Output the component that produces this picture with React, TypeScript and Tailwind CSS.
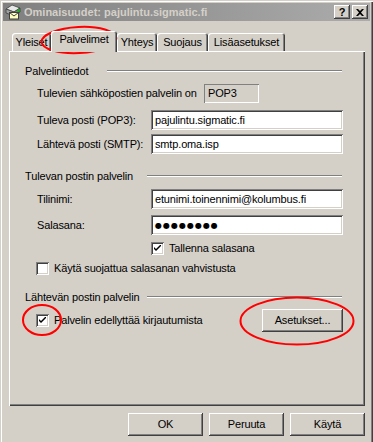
import React from "react";

const sunken =
  "shadow-[inset_1px_1px_0_#808080,inset_-1px_-1px_0_#ffffff,inset_2px_2px_0_#404040,inset_-2px_-2px_0_#d4d0c8]";
const raised =
  "shadow-[inset_-1px_-1px_0_#404040,inset_1px_1px_0_#ffffff,inset_-2px_-2px_0_#808080]";

function TitleIcon() {
  return (
    <svg width="16" height="16" viewBox="0 0 16 16" className="shrink-0">
      <polygon points="1,5 7,1 15,4 9,8" fill="#e8e8e8" stroke="#404040" strokeWidth="0.8" />
      <polygon points="1,5 9,8 9,12 1,9" fill="#a0a0a0" stroke="#404040" strokeWidth="0.8" />
      <polygon points="9,8 15,4 15,8 9,12" fill="#808080" stroke="#404040" strokeWidth="0.8" />
      <rect x="4.5" y="8.5" width="9" height="6.5" fill="#ffffc0" stroke="#404040" strokeWidth="1" />
      <polyline points="4.5,8.5 9,12 13.5,8.5" fill="none" stroke="#404040" strokeWidth="1" />
      <circle cx="13.5" cy="6.5" r="1.3" fill="#00c000" />
    </svg>
  );
}

function CaptionButton({ children }: { children: React.ReactNode }) {
  return (
    <div className={`flex h-[14px] w-[16px] items-center justify-center bg-[#d4d0c8] ${raised}`}>
      {children}
    </div>
  );
}

function ActiveTab({ label }: { label: string }) {
  return (
    <div className="relative z-10 mb-[-1px] flex h-[21px] w-[66px] justify-center rounded-t-[3px] bg-[#d4d0c8] pt-[2px] shadow-[inset_1px_1px_0_#ffffff,inset_-1px_0_0_#404040,inset_-2px_0_0_#808080]">
      {label}
    </div>
  );
}

function InactiveTab({ label, width }: { label: string; width: string }) {
  return (
    <div
      className={`flex h-[18px] ${width} items-center justify-center rounded-t-[3px] shadow-[inset_1px_1px_0_#ffffff,inset_-1px_0_0_#404040,inset_-2px_0_0_#808080]`}
    >
      {label}
    </div>
  );
}

function GroupHeader({ label, labelWidth, className }: { label: string; labelWidth: string; className: string }) {
  return (
    <div className={`flex h-[14px] items-center ${className}`}>
      <span className={`${labelWidth} shrink-0 pl-[16px]`}>{label}</span>
      <div className="mr-[23px] flex-1 border-t border-b border-t-[#808080] border-b-white" />
    </div>
  );
}

function Field({ label, value, className, password }: { label: string; value: string; className: string; password?: boolean }) {
  return (
    <div className={`flex h-[20px] items-center pl-[28px] ${className}`}>
      <span className="w-[114px] shrink-0">{label}</span>
      <div className={`flex h-[20px] w-[192px] items-center bg-white pl-[4px] ${sunken}`}>
        {password ? (
          <span className="font-['DejaVu_Sans',sans-serif] text-[8px] tracking-[1px]">{value}</span>
        ) : (
          value
        )}
      </div>
    </div>
  );
}

function CheckBox({ checked }: { checked?: boolean }) {
  return (
    <div className={`flex h-[13px] w-[13px] shrink-0 items-center justify-center bg-white ${sunken}`}>
      {checked ? (
        <svg width="7" height="7" viewBox="0 0 7 7">
          <path d="M0 2 L0 4 L2 6 L7 1 L7 -1 L2 4 Z" fill="#000" />
        </svg>
      ) : null}
    </div>
  );
}

function DialogButton({ label, width }: { label: string; width: string }) {
  return (
    <div className={`flex h-[23px] ${width} items-center justify-center bg-[#d4d0c8] ${raised}`}>
      {label}
    </div>
  );
}

export default function App() {
  return (
    <div className="relative h-[442px] w-[373px] overflow-hidden bg-[#d4d0c8] pt-[3px] font-['Liberation_Sans',Arial,sans-serif] text-[11px] leading-[13px] tracking-[-0.15px] text-black shadow-[inset_1px_1px_0_#d4d0c8,inset_2px_2px_0_#ffffff,inset_-1px_0_0_#404040,inset_-2px_0_0_#808080]">
      {/* title bar */}
      <div className="mx-[3px] flex h-[18px] items-center bg-gradient-to-r from-[#808080] to-[#acacac] pl-[2px] pr-[2px]">
        <TitleIcon />
        <span className="ml-[3px] font-bold tracking-normal text-[#d4d0c8]">Ominaisuudet: pajulintu.sigmatic.fi</span>
        <div className="ml-auto flex gap-[2px]">
          <CaptionButton>
            <span className="text-[11px] font-bold leading-none">?</span>
          </CaptionButton>
          <CaptionButton>
            <svg width="8" height="7" viewBox="0 0 8 7">
              <path d="M0 0 L2 0 L4 2 L6 0 L8 0 L5 3.5 L8 7 L6 7 L4 5 L2 7 L0 7 L3 3.5 Z" fill="#000" />
            </svg>
          </CaptionButton>
        </div>
      </div>

      {/* tabs */}
      <div className="ml-[12px] mt-[10px] flex h-[20px] items-end">
        <InactiveTab label="Yleiset" width="w-[39px]" />
        <ActiveTab label="Palvelimet" />
        <InactiveTab label="Yhteys" width="w-[40px]" />
        <InactiveTab label="Suojaus" width="w-[51px]" />
        <InactiveTab label="Lisäasetukset" width="w-[77px]" />
      </div>

      {/* panel */}
      <div className="relative ml-[9px] flex h-[355px] w-[356px] flex-col shadow-[inset_1px_1px_0_#ffffff,inset_-1px_-1px_0_#404040,inset_-2px_-2px_0_#808080]">
        <GroupHeader label="Palvelintiedot" labelWidth="w-[98px]" className="mt-[13px]" />
        <div className="mt-[6px] flex h-[19px] items-center pl-[28px]">
          <span className="w-[167px] shrink-0">Tulevien sähköpostien palvelin on</span>
          <div className="flex h-[19px] w-[55px] items-center pl-[4px] shadow-[inset_1px_1px_0_#808080,inset_-1px_-1px_0_#ffffff]">
            POP3
          </div>
        </div>
        <Field label="Tuleva posti (POP3):" value="pajulintu.sigmatic.fi" className="mt-[7px]" />
        <Field label="Lähtevä posti (SMTP):" value="smtp.oma.isp" className="mt-[4px]" />

        <GroupHeader label="Tulevan postin palvelin" labelWidth="w-[138px]" className="mt-[15px]" />
        <Field label="Tilinimi:" value="etunimi.toinennimi@kolumbus.fi" className="mt-[6px]" />
        <Field label="Salasana:" value="●●●●●●●●" className="mt-[6px]" password />
        <div className="ml-[142px] mt-[7px] flex h-[13px] items-center gap-[5px]">
          <CheckBox checked />
          <span>Tallenna salasana</span>
        </div>
        <div className="ml-[27px] mt-[7px] flex h-[13px] items-center gap-[5px]">
          <CheckBox />
          <span>Käytä suojattua salasanan vahvistusta</span>
        </div>

        <GroupHeader label="Lähtevän postin palvelin" labelWidth="w-[138px]" className="mt-[15px]" />
        <div className="mt-[5px] flex h-[23px] items-center pl-[27px] pr-[22px]">
          <CheckBox checked />
          <span className="ml-[5px]">Palvelin edellyttää kirjautumista</span>
          <div className="ml-auto">
            <DialogButton label="Asetukset..." width="w-[81px]" />
          </div>
        </div>
      </div>

      {/* dialog buttons */}
      <div className="ml-[9px] mt-[7px] flex w-[356px] justify-end gap-[6px]">
        <DialogButton label="OK" width="w-[75px]" />
        <DialogButton label="Peruuta" width="w-[75px]" />
        <DialogButton label="Käytä" width="w-[75px]" />
      </div>

      {/* red annotation circles */}
      <svg className="pointer-events-none absolute left-0 top-0" width="373" height="442">
        <ellipse cx="79" cy="40" rx="37.5" ry="13" fill="none" stroke="#ff0000" strokeWidth="2" transform="rotate(-3 79 40)" />
        <ellipse cx="42" cy="320" rx="19" ry="15" fill="none" stroke="#ff0000" strokeWidth="2" />
        <ellipse cx="297" cy="321" rx="56.5" ry="23.5" fill="none" stroke="#ff0000" strokeWidth="2" />
      </svg>
    </div>
  );
}
